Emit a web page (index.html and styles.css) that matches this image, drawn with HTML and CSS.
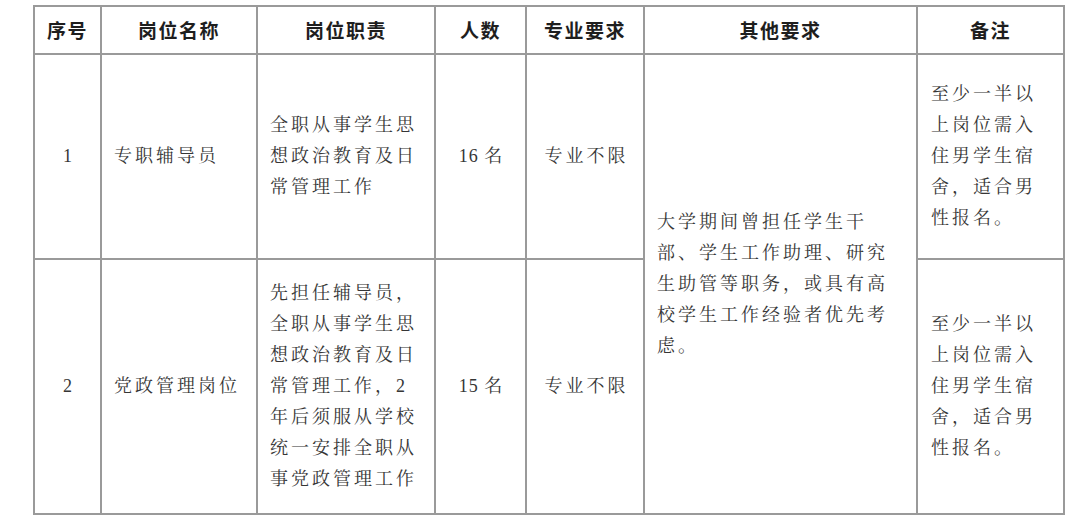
FILE: index.html
```html
<!DOCTYPE html>
<html lang="zh-CN">
<head>
<meta charset="utf-8">
<title>岗位表</title>
<link rel="stylesheet" href="styles.css">
</head>
<body>
<table class="jobs">
  <colgroup>
    <col class="c-no">
    <col class="c-name">
    <col class="c-duty">
    <col class="c-count">
    <col class="c-major">
    <col class="c-other">
    <col class="c-note">
  </colgroup>
  <thead>
    <tr class="head-row">
      <th>序号</th>
      <th>岗位名称</th>
      <th>岗位职责</th>
      <th>人数</th>
      <th>专业要求</th>
      <th>其他要求</th>
      <th>备注</th>
    </tr>
  </thead>
  <tbody>
    <tr class="row-1">
      <td class="center">1</td>
      <td class="left">专职辅导员</td>
      <td class="left">全职从事学生思<br>想政治教育及日<br>常管理工作</td>
      <td class="center count">16 名</td>
      <td class="center">专业不限</td>
      <td class="left other" rowspan="2">大学期间曾担任学生干<br>部、学生工作助理、研究<br>生助管等职务，或具有高<br>校学生工作经验者优先考<br>虑。</td>
      <td class="left note">至少一半以<br>上岗位需入<br>住男学生宿<br>舍，适合男<br>性报名。</td>
    </tr>
    <tr class="row-2">
      <td class="center">2</td>
      <td class="left">党政管理岗位</td>
      <td class="left">先担任辅导员，<br>全职从事学生思<br>想政治教育及日<br>常管理工作，2<br>年后须服从学校<br>统一安排全职从<br>事党政管理工作</td>
      <td class="center count">15 名</td>
      <td class="center">专业不限</td>
      <td class="left note">至少一半以<br>上岗位需入<br>住男学生宿<br>舍，适合男<br>性报名。</td>
    </tr>
  </tbody>
</table>
</body>
</html>
```

FILE: styles.css
```css
html, body {
  margin: 0;
  padding: 0;
  background: #ffffff;
}

body {
  padding: 5px 0 0 33px;
}

.jobs {
  border-collapse: collapse;
  table-layout: fixed;
  width: 1032px;
  font-family: "Liberation Serif", "Noto Serif CJK SC", "Noto Sans CJK SC", serif;
  color: #363636;
}

.c-no { width: 67px; }
.c-name { width: 156px; }
.c-duty { width: 178px; }
.c-count { width: 91px; }
.c-major { width: 118px; }
.c-other { width: 273px; }
.c-note { width: 147px; }

.jobs th,
.jobs td {
  border: 2px solid #9a9a9a;
  padding: 0;
  vertical-align: middle;
  white-space: nowrap;
}

.jobs th {
  font-family: "Noto Sans CJK SC", sans-serif;
  font-weight: 700;
  font-size: 19px;
  letter-spacing: 1.5px;
  color: #1e1e1e;
  text-align: center;
  line-height: 24px;
}

.head-row { height: 48px; }
.row-1 { height: 205px; }
.row-2 { height: 255px; }

.jobs td {
  font-size: 18px;
  letter-spacing: 3px;
  line-height: 31px;
}

.jobs td.center {
  text-align: center;
  padding: 0 0 0 3px;
}

.jobs td.count {
  letter-spacing: 1px;
  padding-left: 1px;
}

.jobs td.left {
  text-align: left;
  padding: 0 0 0 12px;
}

.jobs td.note {
  padding-left: 13px;
}
```
